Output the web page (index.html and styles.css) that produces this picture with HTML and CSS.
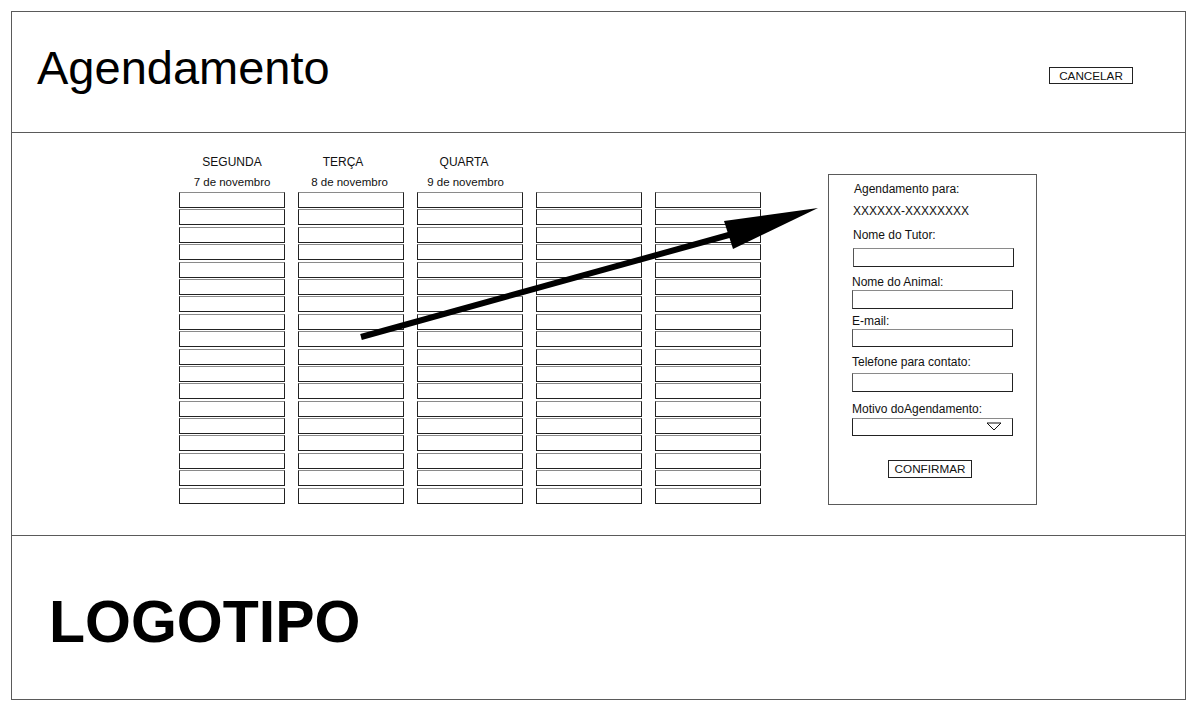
FILE: index.html
```html
<!DOCTYPE html>
<html lang="pt">
<head>
<meta charset="utf-8">
<title>Agendamento</title>
<link rel="stylesheet" href="styles.css">
</head>
<body>
<div class="frame">
  <header class="top">
    <h1 class="title">Agendamento</h1>
    <button type="button" class="btn btn-cancel">CANCELAR</button>
  </header>
  <main class="content">
    <div class="calendar">
      <div class="day">
        <div class="day-name">SEGUNDA</div>
        <div class="day-date">7 de novembro</div>
        <div class="slots">
          <div class="slot"></div><div class="slot"></div><div class="slot"></div><div class="slot"></div><div class="slot"></div><div class="slot"></div>
          <div class="slot"></div><div class="slot"></div><div class="slot"></div><div class="slot"></div><div class="slot"></div><div class="slot"></div>
          <div class="slot"></div><div class="slot"></div><div class="slot"></div><div class="slot"></div><div class="slot"></div><div class="slot"></div>
        </div>
      </div>
      <div class="day">
        <div class="day-name day-name-tue">TERÇA</div>
        <div class="day-date day-date-tue">8 de novembro</div>
        <div class="slots">
          <div class="slot"></div><div class="slot"></div><div class="slot"></div><div class="slot"></div><div class="slot"></div><div class="slot"></div>
          <div class="slot"></div><div class="slot"></div><div class="slot"></div><div class="slot"></div><div class="slot"></div><div class="slot"></div>
          <div class="slot"></div><div class="slot"></div><div class="slot"></div><div class="slot"></div><div class="slot"></div><div class="slot"></div>
        </div>
      </div>
      <div class="day">
        <div class="day-name day-name-wed">QUARTA</div>
        <div class="day-date day-date-wed">9 de novembro</div>
        <div class="slots">
          <div class="slot"></div><div class="slot"></div><div class="slot"></div><div class="slot"></div><div class="slot"></div><div class="slot"></div>
          <div class="slot"></div><div class="slot"></div><div class="slot"></div><div class="slot"></div><div class="slot"></div><div class="slot"></div>
          <div class="slot"></div><div class="slot"></div><div class="slot"></div><div class="slot"></div><div class="slot"></div><div class="slot"></div>
        </div>
      </div>
      <div class="day">
        <div class="day-name"></div>
        <div class="day-date"></div>
        <div class="slots">
          <div class="slot"></div><div class="slot"></div><div class="slot"></div><div class="slot"></div><div class="slot"></div><div class="slot"></div>
          <div class="slot"></div><div class="slot"></div><div class="slot"></div><div class="slot"></div><div class="slot"></div><div class="slot"></div>
          <div class="slot"></div><div class="slot"></div><div class="slot"></div><div class="slot"></div><div class="slot"></div><div class="slot"></div>
        </div>
      </div>
      <div class="day">
        <div class="day-name"></div>
        <div class="day-date"></div>
        <div class="slots">
          <div class="slot"></div><div class="slot"></div><div class="slot"></div><div class="slot"></div><div class="slot"></div><div class="slot"></div>
          <div class="slot"></div><div class="slot"></div><div class="slot"></div><div class="slot"></div><div class="slot"></div><div class="slot"></div>
          <div class="slot"></div><div class="slot"></div><div class="slot"></div><div class="slot"></div><div class="slot"></div><div class="slot"></div>
        </div>
      </div>
    </div>

    <form class="panel">
      <div class="txt txt-for">Agendamento para:</div>
      <div class="txt txt-code">XXXXXX-XXXXXXXX</div>
      <label class="txt lbl-tutor">Nome do Tutor:</label>
      <input class="field field-tutor" type="text">
      <label class="txt lbl-animal">Nome do Animal:</label>
      <input class="field field-animal" type="text">
      <label class="txt lbl-email">E-mail:</label>
      <input class="field field-email" type="text">
      <label class="txt lbl-phone">Telefone para contato:</label>
      <input class="field field-phone" type="text">
      <label class="txt lbl-reason">Motivo doAgendamento:</label>
      <div class="select">
        <svg class="select-caret" width="16" height="9" viewBox="0 0 16 9"><polygon points="1,1 15,1 8,8" fill="#fff" stroke="#111" stroke-width="1"/></svg>
      </div>
      <button type="button" class="btn btn-confirm">CONFIRMAR</button>
    </form>
  </main>
  <footer class="bottom">
    <div class="logo">LOGOTIPO</div>
  </footer>
</div>
<svg class="arrow" width="1204" height="712" viewBox="0 0 1204 712">
  <line x1="361" y1="337" x2="736" y2="233" stroke="#000" stroke-width="6"/>
  <polygon points="818,208 724,221 733,249" fill="#000"/>
</svg>
</body>
</html>
```
FILE: styles.css
```css
* { box-sizing: border-box; }

html, body {
  margin: 0;
  padding: 0;
  background: #fff;
}

body {
  font-family: "Liberation Sans", Arial, Helvetica, sans-serif;
  color: #111;
  position: relative;
  width: 1204px;
  height: 712px;
  overflow: hidden;
}

.frame {
  margin: 11px 0 0 11px;
  width: 1175px;
  height: 689px;
  border: 1px solid #5a5a5a;
  display: flex;
  flex-direction: column;
}

/* header */
.top {
  height: 121px;
  flex: none;
  border-bottom: 1px solid #5a5a5a;
  display: flex;
  align-items: flex-start;
  padding: 32px 0 0 25px;
}

.title {
  margin: 0;
  font-weight: normal;
  font-size: 47px;
  line-height: 47px;
  color: #000;
}

.btn {
  font-family: "Liberation Sans", Arial, Helvetica, sans-serif;
  font-size: 11.7px;
  color: #111;
  background: #fff;
  border: 1px solid #222;
  padding: 0;
  margin: 0;
  line-height: 1;
  border-radius: 0;
  display: flex;
  align-items: center;
  justify-content: center;
}

.btn-cancel {
  width: 84px;
  height: 17px;
  margin: 23px 52px 0 auto;
}

/* content */
.content {
  height: 403px;
  flex: none;
  border-bottom: 1px solid #5a5a5a;
  display: flex;
  align-items: flex-start;
  padding: 19px 0 0 167px;
}

.calendar {
  display: flex;
  gap: 13px;
}

.day {
  width: 106px;
  display: flex;
  flex-direction: column;
}

.day-name {
  height: 20px;
  line-height: 20px;
  font-size: 12px;
  text-align: center;
}

.day-name-tue { padding-right: 16px; }
.day-name-wed { padding-right: 12px; }

.day-date {
  height: 20px;
  line-height: 20px;
  font-size: 11.5px;
  text-align: center;
}

.day-date-tue { padding-right: 3px; }
.day-date-wed { padding-right: 9px; }

.slots {
  display: flex;
  flex-direction: column;
  gap: 1.4px;
}

.slot {
  height: 16px;
  border: 1px solid #222;
  border-top-color: #8a8a8a;
  background: #fff;
}

/* panel */
.panel {
  margin: 22px 0 0 67px;
  width: 209px;
  height: 331px;
  border: 1px solid #5a5a5a;
  padding: 0 0 0 23px;
  display: flex;
  flex-direction: column;
  align-items: flex-start;
}

.txt {
  display: block;
  font-size: 12px;
  line-height: 16px;
  height: 16px;
  color: #111;
}

.txt-for { margin-top: 6px; padding-left: 2px; }
.txt-code { margin-top: 6px; padding-left: 1px; }
.lbl-tutor { margin-top: 8px; padding-left: 1px; }
.lbl-animal { margin-top: 7px; }
.lbl-email { margin-top: 4px; }
.lbl-phone { margin-top: 7px; }
.lbl-reason { margin-top: 9px; }

.field {
  display: block;
  width: 161px;
  height: 19px;
  border: 1px solid #222;
  border-top-color: #8a8a8a;
  border-left-color: #555;
  padding: 0;
  margin: 0;
  background: #fff;
  border-radius: 0;
  outline: none;
}

.field-tutor { margin-top: 5px; margin-left: 1px; }
.field-animal { margin-top: 0; }
.field-email { margin-top: 0; height: 18px; }
.field-phone { margin-top: 3px; }

.select {
  margin-top: 1px;
  width: 161px;
  height: 18px;
  border: 1px solid #222;
  border-top-color: #8a8a8a;
  display: flex;
  align-items: flex-start;
  justify-content: flex-end;
  padding: 3px 10px 0 0;
}

.select-caret {
  display: block;
}

.btn-confirm {
  width: 84px;
  height: 18px;
  margin: 24px 0 0 36px;
}

/* footer */
.bottom {
  flex: 1;
  padding: 57px 0 0 37px;
}

.logo {
  font-size: 59px;
  line-height: 59px;
  font-weight: bold;
  color: #000;
}

/* arrow overlay */
.arrow {
  position: absolute;
  left: 0;
  top: 0;
  pointer-events: none;
}
```
